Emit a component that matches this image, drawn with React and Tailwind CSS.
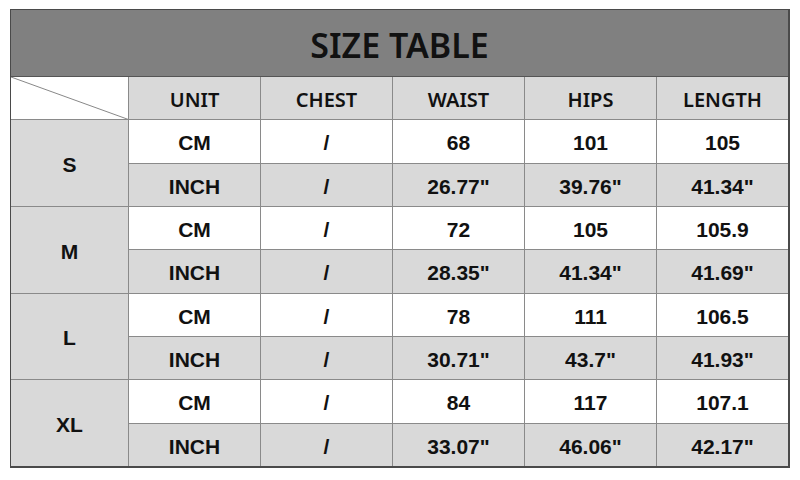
import React from "react";

const headers = ["UNIT", "CHEST", "WAIST", "HIPS", "LENGTH"];

const sizes = [
  { size: "S", cm: ["68", "101", "105"], inch: ['26.77"', '39.76"', '41.34"'] },
  { size: "M", cm: ["72", "105", "105.9"], inch: ['28.35"', '41.34"', '41.69"'] },
  { size: "L", cm: ["78", "111", "106.5"], inch: ['30.71"', '43.7"', '41.93"'] },
  { size: "XL", cm: ["84", "117", "107.1"], inch: ['33.07"', '46.06"', '42.17"'] },
];

const body = "flex items-center justify-center pt-[3px] font-['Liberation_Sans',Arial,sans-serif] font-bold text-[21px] text-[#111]";

export default function App() {
  return (
    <div className="w-[800px] h-[480px] bg-white pt-[9px] pl-[10px]">
      <div className="w-[780px] h-[459px] border-l border-t border-r-2 border-b-2 border-[#4a4a4a] flex flex-col">
        {/* title bar */}
        <div className="h-[67px] bg-[#808080] border-b border-[#555] flex items-center justify-center pt-[4px]">
          <span className="font-['Noto_Sans',sans-serif] font-semibold text-[34px] text-[#111]">
            SIZE TABLE
          </span>
        </div>

        <div className="h-[389px] grid grid-cols-[117px_repeat(5,1fr)] grid-rows-[repeat(9,1fr)] gap-px bg-[#8a8a8a]">
          <div className="bg-white relative">
            <svg className="absolute inset-0 w-full h-full" viewBox="0 0 100 100" preserveAspectRatio="none">
              <line x1="0" y1="0" x2="100" y2="100" stroke="#888" strokeWidth="1" vectorEffect="non-scaling-stroke" />
            </svg>
          </div>
          {headers.map((h) => (
            <div key={h} className="bg-[#d9d9d9] flex items-center justify-center pt-[3px] font-['Noto_Sans',sans-serif] font-semibold text-[20px] text-[#111]">
              {h}
            </div>
          ))}

          {sizes.map((s) => (
            <React.Fragment key={s.size}>
              <div className={`row-span-2 bg-[#d9d9d9] ${body}`}>{s.size}</div>
              <div className={`bg-white ${body}`}>CM</div>
              <div className={`bg-white ${body}`}>/</div>
              {s.cm.map((v, i) => (
                <div key={"c" + i} className={`bg-white ${body}`}>{v}</div>
              ))}
              <div className={`bg-[#d9d9d9] ${body}`}>INCH</div>
              <div className={`bg-[#d9d9d9] ${body}`}>/</div>
              {s.inch.map((v, i) => (
                <div key={"i" + i} className={`bg-[#d9d9d9] ${body}`}>{v}</div>
              ))}
            </React.Fragment>
          ))}
        </div>
      </div>
    </div>
  );
}
